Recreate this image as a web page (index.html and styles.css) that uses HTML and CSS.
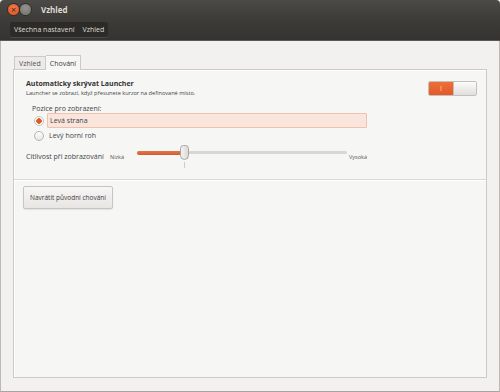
FILE: index.html
```html
<!DOCTYPE html>
<html lang="cs">
<head>
  <meta charset="UTF-8">
  <title>Vzhled</title>
  <link rel="stylesheet" href="styles.css">
</head>
<body>
<div class="window">
  <div class="titlebar">
    <span class="wbtn close">&#215;</span>
    <span class="wbtn minimize"></span>
    <span class="title">Vzhled</span>
  </div>

  <div class="toolbar">
    <div class="crumbs">
      <span class="crumb">Všechna nastavení</span>
      <span class="crumb">Vzhled</span>
    </div>
  </div>

  <div class="content">
    <div class="tabs">
      <span class="tab">Vzhled</span>
      <span class="tab active">Chování</span>
    </div>

    <div class="panel">
      <div class="hide-row">
        <div class="hide-text">
          <div class="hide-title">Automaticky skrývat Launcher</div>
          <div class="hide-sub">Launcher se zobrazí, když přesunete kurzor na definované místo.</div>
        </div>
        <div class="switch">
          <span class="switch-on">I</span>
          <span class="switch-off"></span>
        </div>
      </div>

      <div class="position">
        <div class="position-label">Pozice pro zobrazení:</div>
        <div class="radio-row">
          <span class="radio checked"></span>
          <span class="radio-text selected">Levá strana</span>
        </div>
        <div class="radio-row">
          <span class="radio"></span>
          <span class="radio-text">Levý horní roh</span>
        </div>
      </div>

      <div class="sense-row">
        <span class="sense-label">Citlivost při zobrazování</span>
        <span class="scale-mark">Nízká</span>
        <div class="slider">
          <div class="track">
            <div class="fill"></div>
          </div>
          <span class="knob"></span>
          <span class="tick"></span>
        </div>
        <span class="scale-mark">Vysoká</span>
      </div>

      <div class="reset-row">
        <button class="reset-btn">Navrátit původní chování</button>
      </div>
    </div>
  </div>
</div>
</body>
</html>
```

FILE: styles.css
```css
* {
  margin: 0;
  padding: 0;
  box-sizing: border-box;
}

body {
  width: 500px;
  height: 392px;
  overflow: hidden;
  font-family: 'Open Sans', 'DejaVu Sans', sans-serif;
  color: #3c3c3c;
  background: #f2f1f0;
}

.window {
  display: flex;
  flex-direction: column;
  height: 392px;
}

/* title bar */
.titlebar {
  height: 19px;
  display: flex;
  align-items: center;
  padding-left: 8px;
  background: linear-gradient(#4b4a46, #3d3c38);
  border-radius: 4px 4px 0 0;
}

.wbtn {
  width: 11px;
  height: 11px;
  border-radius: 50%;
  margin-right: 1px;
  display: flex;
  align-items: center;
  justify-content: center;
  font-size: 9px;
  line-height: 1;
  color: #4a2010;
}

.close {
  background: radial-gradient(circle at 50% 35%, #f37a4a, #dc4c1c);
  box-shadow: 0 0 0 1px #302f2b;
}

.minimize {
  background: radial-gradient(circle at 50% 35%, #96948e, #6f6d68);
  box-shadow: 0 0 0 1px #302f2b;
}

.title {
  margin-left: 9px;
  color: #dfdbd2;
  font-size: 8px;
  font-weight: 700;
}

/* toolbar */
.toolbar {
  height: 22px;
  display: flex;
  align-items: center;
  padding-left: 10px;
  background: linear-gradient(#3d3c38, #34332f);
  border-bottom: 1px solid #5a5853;
}

.crumbs {
  display: flex;
  height: 15px;
  background: #2c2b28;
  border-radius: 2px;
  box-shadow: 0 1px 0 #4a4945;
}

.crumb {
  display: flex;
  align-items: center;
  padding: 0 4px;
  color: #dfdbd2;
  font-size: 7px;
}

/* content */
.content {
  flex: 1;
  display: flex;
  flex-direction: column;
  padding: 13px 12px 13px 12px;
  border-left: 1px solid #bcb9b4;
  border-right: 1px solid #bcb9b4;
  border-bottom: 1px solid #a9a6a1;
}

.tabs {
  display: flex;
  align-items: flex-end;
  height: 15px;
  padding-left: 1px;
}

.tab {
  height: 13px;
  display: flex;
  align-items: center;
  padding: 0 4px;
  font-size: 7px;
  color: #555;
  background: #ecebe9;
  border: 1px solid #cdcac6;
  border-bottom: none;
}

.tab.active {
  height: 15px;
  background: #f6f6f5;
  color: #3c3c3c;
  border-left: none;
  position: relative;
  top: 1px;
}

.panel {
  flex: 1;
  display: flex;
  flex-direction: column;
  background: #f6f6f5;
  border: 1px solid #cdcac6;
  box-shadow: inset 1px 1px 0 #fff;
}

.hide-row {
  display: flex;
  justify-content: space-between;
  padding: 9px 9px 0 12px;
}

.hide-title {
  font-size: 7px;
  font-weight: 700;
  color: #333;
  line-height: 10px;
}

.hide-sub {
  font-size: 5.6px;
  color: #444;
  line-height: 8px;
}

.switch {
  margin-top: 2px;
  display: flex;
  width: 49px;
  height: 15px;
  border-radius: 2px;
  border: 1px solid #c4c1bc;
  overflow: hidden;
}

.switch-on {
  width: 24px;
  display: flex;
  align-items: center;
  justify-content: center;
  font-size: 7px;
  color: #ffdd99;
  background: linear-gradient(#ee6f3a, #e2592a);
}

.switch-off {
  flex: 1;
  background: linear-gradient(#fbfbfa, #e1dfdc);
  border-left: 1px solid #c4c1bc;
}

.position {
  padding: 7px 0 0 18px;
}

.position-label {
  font-size: 7px;
  line-height: 9px;
  color: #444;
}

.radio-row {
  display: flex;
  align-items: center;
  height: 15px;
  margin-left: 2px;
}

.radio {
  width: 10px;
  height: 10px;
  border-radius: 50%;
  border: 1px solid #b7b4af;
  background: linear-gradient(#fff, #e8e6e3);
  margin-right: 3px;
}

.radio.checked {
  border-color: #c8c5c0;
  background: radial-gradient(circle, #e05a28 0, #e05a28 2.5px, #fdfcfc 3px);
}

.radio-text {
  font-size: 7px;
  color: #444;
  height: 15px;
  display: flex;
  align-items: center;
  padding-left: 2px;
  width: 320px;
}

.radio-text.selected {
  background: #fae5dd;
  border: 1px solid #f2c0ae;
  border-radius: 1px;
}

.sense-row {
  display: flex;
  align-items: center;
  margin-top: 2px;
  padding-left: 12px;
  height: 24px;
}

.sense-label {
  font-size: 7px;
  color: #444;
  width: 84px;
  margin-top: -2px;
}

.scale-mark {
  font-size: 5.5px;
  color: #555;
}

.slider {
  position: relative;
  width: 210px;
  height: 24px;
  margin: 0 2px 0 13px;
}

.track {
  position: absolute;
  left: 0;
  right: 0;
  top: 6px;
  height: 3px;
  border-radius: 2px;
  background: #d9d7d3;
}

.fill {
  width: 48px;
  height: 4px;
  margin-top: -0.5px;
  border-radius: 2px;
  background: linear-gradient(#e5774d, #d05a30);
}

/* knob sits over the track */
.knob {
  position: absolute;
  left: 43px;
  top: 0;
  width: 9px;
  height: 15px;
  border-radius: 4px 4px 5px 5px;
  border: 1px solid #a9a6a1;
  background: linear-gradient(90deg, #f4f3f2, #dcdad6);
}

.tick {
  position: absolute;
  left: 47px;
  top: 17px;
  width: 1px;
  height: 6px;
  background: #cfcdc9;
}

.reset-row {
  margin-top: 10px;
  border-top: 1px solid #dad8d4;
  box-shadow: inset 0 1px 0 #fff;
  padding: 3px 0 0 9px;
}

.reset-btn {
  font-family: inherit;
  font-size: 6.5px;
  color: #3c3c3c;
  width: 90px;
  height: 23px;
  border: 1px solid #c8c5c0;
  border-radius: 2px;
  background: linear-gradient(#f7f6f5, #e8e6e3);
  box-shadow: 0 1px 1px rgba(0, 0, 0, 0.08);
}
```
